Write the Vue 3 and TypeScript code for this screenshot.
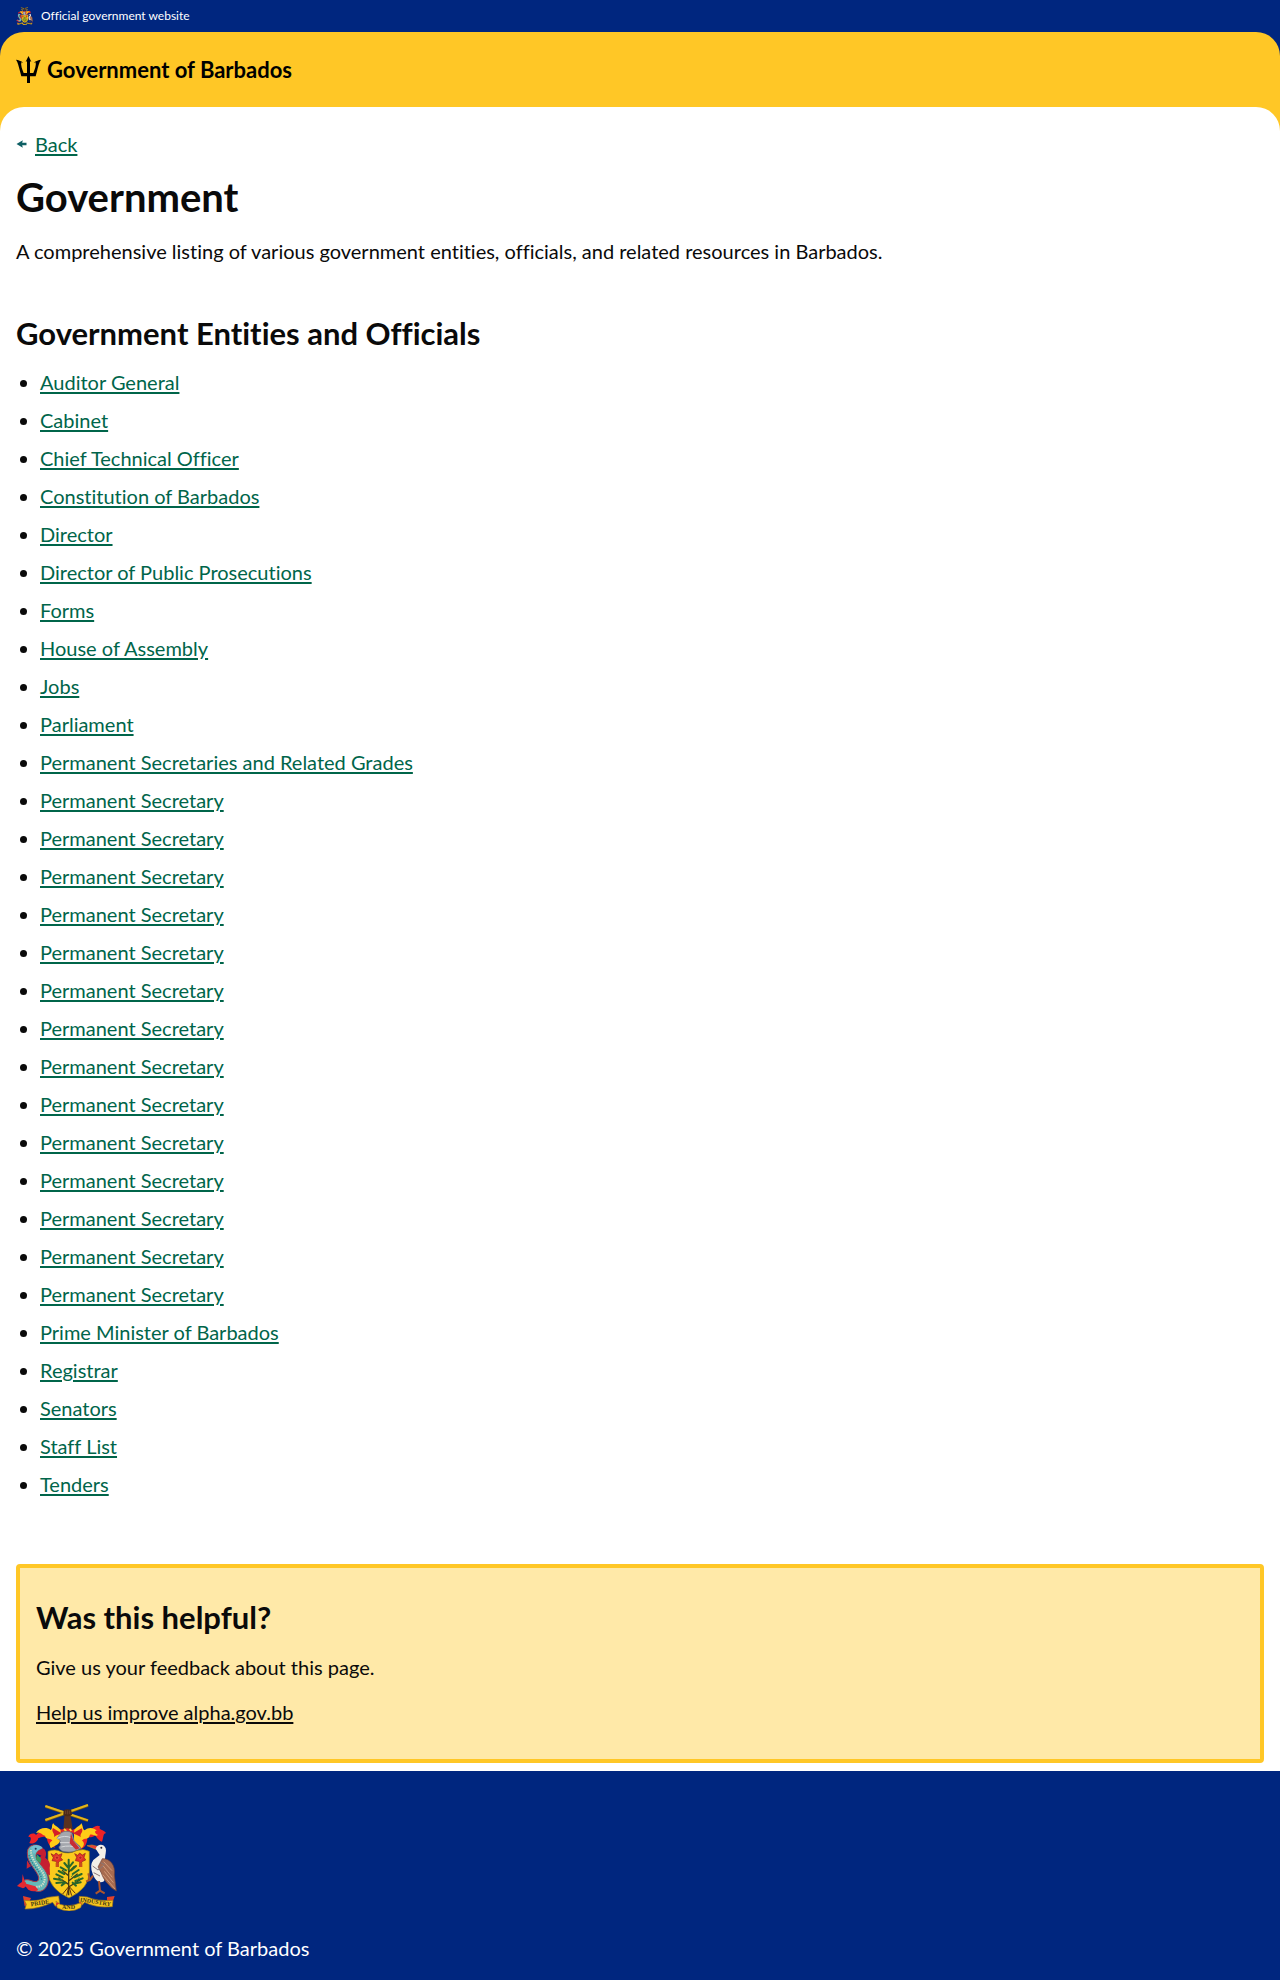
<script setup lang="ts">
const secretaries: string[] = Array.from({ length: 14 }, () => 'Permanent Secretary')

const entries: string[] = [
  'Auditor General',
  'Cabinet',
  'Chief Technical Officer',
  'Constitution of Barbados',
  'Director',
  'Director of Public Prosecutions',
  'Forms',
  'House of Assembly',
  'Jobs',
  'Parliament',
  'Permanent Secretaries and Related Grades',
  ...secretaries,
  'Prime Minister of Barbados',
  'Registrar',
  'Senators',
  'Staff List',
  'Tenders',
]
</script>

<template>
  <div class="page">
    <div class="official">
      <svg class="crest-small" viewBox="46 68 306 324" aria-hidden="true"><use href="#crest" /></svg>
      <span>Official government website</span>
    </div>

    <div class="brand-wrap">
      <header class="brand">
        <a class="brand-link" href="#">
          <svg class="trident" viewBox="0 0 75 81" aria-hidden="true">
            <path d="M37.500 0 L46 17 L42 16 V51 H52 C57 40 61 27 59 19 L53 20 C60 14 68 12 75 11 C69 19 67 31 63 46 L59 61 H42 V81 H33 V61 H16 L12 46 C8 31 6 19 0 11 C7 12 15 14 22 20 L16 19 C14 27 18 40 23 51 H33 V16 L29 17 Z" />
          </svg>
          <span>Government of Barbados</span>
        </a>
      </header>
    </div>

    <div class="main-wrap">
      <main class="main">
        <nav class="back">
          <svg class="arrow" viewBox="0 0 30 24" aria-hidden="true">
            <path d="M0 12 L19 1 L17 8 H30 V16 H17 L19 23 Z" />
          </svg>
          <a href="#">Back</a>
        </nav>

        <h1>Government</h1>
        <p class="lead">A comprehensive listing of various government entities, officials, and related resources in Barbados.</p>

        <h2>Government Entities and Officials</h2>
        <ul class="entries">
          <li v-for="(entry, index) in entries" :key="index"><a href="#">{{ entry }}</a></li>
        </ul>

        <section class="feedback">
          <h2>Was this helpful?</h2>
          <p>Give us your feedback about this page.</p>
          <a href="#">Help us improve alpha.gov.bb</a>
        </section>
      </main>
    </div>

    <footer class="footer">
      <svg class="crest" viewBox="46 68 306 324" role="img" aria-label="Coat of arms of Barbados">
        <g id="crest">
          <!-- crossed sugar canes and the arm holding them -->
          <path d="M134 78 L262 121 M262 75 L134 120" stroke="#7a5a10" stroke-width="9" fill="none" />
          <path d="M134 77 L262 120 M262 74 L134 119" stroke="#e3b51c" stroke-width="6" fill="none" />
          <path d="M192 102 L188 147 H216 L209 102 Z" fill="#5a321f" />
          <path d="M189 90 Q200 83 212 90 L214 103 Q201 113 188 103 Z" fill="#4a2919" />
          <path d="M195 91 V101 M201 90 V102 M207 91 V101" stroke="#7b4b30" stroke-width="2" />

          <!-- mantling -->
          <path d="M184 148 C164 139 150 151 138 158 C124 148 116 154 106 164 C100 156 86 160 83 169 C95 169 90 180 86 188 C98 194 112 182 113 173 C122 173 127 164 139 174 C140 190 148 200 164 202 C153 190 169 185 178 176 Z" fill="#ed2326" />
          <path d="M180 150 C172 138 158 134 158 128 C151 137 157 143 150 149 C138 139 116 142 106 158 C119 152 122 163 133 166 C136 181 151 170 155 181 C146 184 145 195 151 204 C159 196 174 195 179 181 Z" fill="#ffcb17" />
          <path d="M157 143 C150 155 164 158 160 170 C170 162 177 164 181 158 Z" fill="#d51e27" />
          <path d="M216 148 C236 139 250 151 262 158 C276 140 287 133 298 138 C292 150 309 147 316 158 C306 160 309 173 304 184 C293 181 290 173 283 165 C274 174 268 168 260 174 C260 192 250 204 239 207 C243 191 231 185 222 176 Z" fill="#ed2326" />
          <path d="M220 150 C228 138 243 134 241 128 C249 137 244 145 252 150 C264 139 280 142 288 151 C279 151 284 161 292 164 C285 171 278 160 268 163 C263 181 251 170 244 181 C251 185 253 195 242 204 C238 193 224 190 220 181 Z" fill="#ffcb17" />
          <path d="M243 144 C250 156 237 158 240 171 C231 162 222 164 218 158 Z" fill="#d51e27" />

          <!-- helmet and wreath -->
          <path d="M180 149 Q200 137 222 151 L217 158 Q200 149 184 157 Z" fill="#e52a27" />
          <path d="M190 146 L197 152 M207 145 L212 152" stroke="#ffd12c" stroke-width="5" />
          <path d="M182 157 Q200 148 214 158 L220 181 L241 203 Q220 220 186 213 Q168 203 179 195 L178 179 L169 174 Z" fill="#a4a7ad" stroke="#74777e" stroke-width="2" />
          <path d="M170 174 Q193 163 213 173 M178 187 L217 187 M182 200 Q205 193 235 203" stroke="#d7d9dc" stroke-width="3" fill="none" />
          <path d="M211 158 L218 181 L237 204 L226 208 L207 189 Z" fill="#c82c35" />

          <!-- shield -->
          <path d="M142 213 Q165 204 181 214 Q205 223 227 211 Q248 203 266 213 V276 Q265 325 205 353 Q145 326 142 276 Z" fill="#fccb1d" stroke="#8b7413" stroke-width="2" />
          <g fill="#e23226" stroke="#8d241d" stroke-width="2">
            <path d="M151 220 L160 225 L166 218 L174 224 L184 220 L180 232 L186 239 L176 243 L171 250 L165 243 L154 241 L158 232 Z" />
            <path d="M222 220 L231 225 L237 218 L245 224 L254 219 L250 231 L255 239 L246 243 L240 250 L234 243 L224 241 L228 231 Z" />
          </g>
          <path d="M165 247 V260 H175 V248 M235 247 V260 H245 V248" fill="#c94f19" />
          <circle cx="169" cy="232" r="5" fill="#b91e22" stroke="#f06b42" stroke-width="2" />
          <circle cx="239" cy="232" r="5" fill="#b91e22" stroke="#f06b42" stroke-width="2" />
          <path d="M204 345 V252 M204 312 L173 292 M204 302 L231 280 M204 320 L238 299 M204 286 L184 270 M204 276 L222 257" stroke="#473c15" stroke-width="4" fill="none" />
          <path d="M204 319 L186 341 M204 319 L198 346 M205 319 L213 346 M206 319 L224 339" stroke="#5b310e" stroke-width="3" />
          <g stroke="#28672a" stroke-width="6" stroke-linecap="round" fill="none">
            <path d="M204 238 V268 M191 248 L201 260 M217 246 L206 260 M180 261 L196 270 M226 257 L212 270 M174 272 L191 281 M234 269 L216 281 M167 282 L186 291 M243 281 L221 291 M160 295 L182 299 M246 294 L224 302 M167 308 L189 306 M240 306 L219 310 M183 315 L194 307 M226 316 L216 307" />
          </g>
          <path d="M184 275 L192 269 M211 290 L219 281 M184 301 L177 292 M228 300 L236 291" stroke="#5c9038" stroke-width="3" />

          <!-- dolphin supporter -->
          <path d="M118 202 C137 202 139 219 134 232 C144 239 151 248 147 262 L148 285 L132 277 L124 265 L118 280 L111 268 L119 242 L111 237 L122 226 L103 218 Z" fill="#c51f32" />
          <path d="M80 217 C80 190 111 187 127 205 C116 205 108 214 106 225 C104 245 144 268 143 299 C142 328 118 341 97 329 C84 319 74 310 62 318 L66 303 C83 288 101 313 113 300 C123 280 77 252 80 217 Z" fill="#65b8b8" stroke="#a63a47" stroke-width="3" />
          <path d="M91 209 C89 246 129 267 132 292 C133 312 119 322 103 319" stroke="#d7dfc8" stroke-width="6" stroke-dasharray="4 3" fill="none" />
          <path d="M85 224 C91 253 121 271 123 300" stroke="#297c90" stroke-width="4" stroke-dasharray="4 4" fill="none" />
          <path d="M91 203 C96 192 116 191 126 203 L113 210 L99 221 Z" fill="#73bfd0" />
          <circle cx="105" cy="205" r="3" fill="#163b53" />
          <path d="M109 222 L122 235 L119 249 L106 238 Z" fill="#389b62" />
          <path d="M66 281 L72 303 C81 310 78 320 67 324 L49 317 Q56 309 64 305 Z M66 307 L104 318 L113 329 Q98 337 83 328 Z" fill="#e32a32" />
          <path d="M79 240 L78 265 L91 258 Z" fill="#ca2636" />

          <!-- pelican supporter -->
          <path d="M289 208 L259 196 L274 194 L301 201 Z" fill="#ed3b37" stroke="#c08623" stroke-width="2" />
          <path d="M285 205 C289 191 309 188 315 204 C318 213 313 224 313 236 L326 261 L310 303 Q290 314 277 283 Q265 256 278 239 L297 224 Z" fill="#f3efe8" />
          <circle cx="302" cy="202" r="3" fill="#262431" />
          <path d="M305 235 C329 234 345 255 341 284 L347 332 L333 323 C323 311 310 302 302 278 L292 260 Z" fill="#a76b50" stroke="#6f4137" stroke-width="2" />
          <path d="M309 244 L334 271 M307 256 L335 291 M311 273 L338 307 M306 283 L343 326" stroke="#d09a79" stroke-width="3" />
          <path d="M276 257 L292 269 L308 256 M279 277 L298 287 M300 247 L312 253" stroke="#8b7777" stroke-width="3" fill="none" />
          <path d="M277 286 L268 299 L256 303 M267 298 L263 279 M295 302 L298 331 L285 340 M298 331 L312 339" stroke="#ad542c" stroke-width="6" fill="none" />

          <!-- motto scroll -->
          <path d="M67 347 L91 353 L83 371 L72 378 Z M319 350 L342 347 L332 376 L319 367 Z" fill="#e3422a" />
          <path d="M71 360 Q108 365 142 351 L174 347 L177 369 L164 378 L156 366 Q112 387 73 386 L77 372 Z M236 348 L260 350 Q288 363 337 360 L335 379 Q287 384 252 366 L245 374 L235 366 Z" fill="#f6c51d" stroke="#9c7319" stroke-width="2" />
          <path d="M166 362 L178 372 Q206 381 238 368 L246 363 L240 382 Q206 402 169 382 Z" fill="#f7c91d" stroke="#9c7319" stroke-width="2" />
          <path d="M164 378 L168 366 L177 369 Z M245 374 L240 366 L235 366 Z" fill="#d93625" />
          <g class="motto" fill="#3e3719">
            <text transform="rotate(-9 122 370)" x="90" y="373">PRIDE</text>
            <text x="184" y="387">AND</text>
            <text transform="rotate(9 287 370)" x="237" y="371">INDUSTRY</text>
          </g>
        </g>
      </svg>
      <p>© 2025 Government of Barbados</p>
    </footer>
  </div>
</template>

<style>
body {
  margin: 0;
}
</style>

<style scoped>
.page {
  font-family: Lato, "Liberation Sans", sans-serif;
  font-size: 20px;
  line-height: 30px;
  font-variant-ligatures: none;
  color: #0a0a0a;
  background: #ffffff;
}

h1,
h2,
p,
ul {
  margin: 0;
}

a {
  color: #00654a;
  text-decoration-line: underline;
  text-decoration-thickness: 2px;
  text-underline-offset: 2px;
}

.official {
  display: flex;
  align-items: center;
  gap: 8px;
  height: 32px;
  padding: 0 16px;
  font-size: 12px;
  line-height: 16px;
  color: #ffffff;
  background: #00267f;
}

.crest-small {
  width: 17px;
  height: 18px;
}

.brand-wrap {
  background: #00267f;
}

.brand {
  padding: 20px 16px;
  border-radius: 24px 24px 0 0;
  background: #ffc726;
}

.brand-link {
  display: flex;
  align-items: center;
  gap: 6px;
  height: 35px;
  font-size: 22px;
  font-weight: 700;
  color: #000000;
  text-decoration: none;
}

.trident {
  width: 25px;
  height: 27px;
}

.main-wrap {
  background: #ffc726;
}

.main {
  padding: 22px 16px 8px;
  border-radius: 24px 24px 0 0;
  background: #ffffff;
}

.back {
  display: flex;
  align-items: center;
  gap: 8px;
  margin-bottom: 13px;
}

.arrow {
  width: 11px;
  height: 8px;
  fill: #0e5f64;
}

h1 {
  font-size: 40px;
  line-height: 50px;
  font-weight: 700;
}

h2 {
  font-size: 31px;
  line-height: 40px;
  font-weight: 700;
}

.lead {
  margin-top: 14px;
  margin-bottom: 47px;
}

.entries {
  display: flex;
  flex-direction: column;
  gap: 8px;
  margin: 14px 0 65px;
  padding-left: 24px;
}

.feedback {
  padding: 29px 16px 32px;
  border: 4px solid #ffc726;
  border-radius: 4px;
  background: #ffe9a8;
}

.feedback p {
  margin: 15px 0;
}

.feedback a {
  display: block;
  width: fit-content;
  color: #0a0a0a;
}

.footer {
  padding: 32px 16px 17px;
  color: #ffffff;
  background: #00267f;
}

.crest {
  display: block;
  width: 102px;
  height: 108px;
  margin-bottom: 22px;
}

.motto {
  font-family: "Liberation Serif", serif;
  font-size: 18px;
  font-weight: 700;
}
</style>
